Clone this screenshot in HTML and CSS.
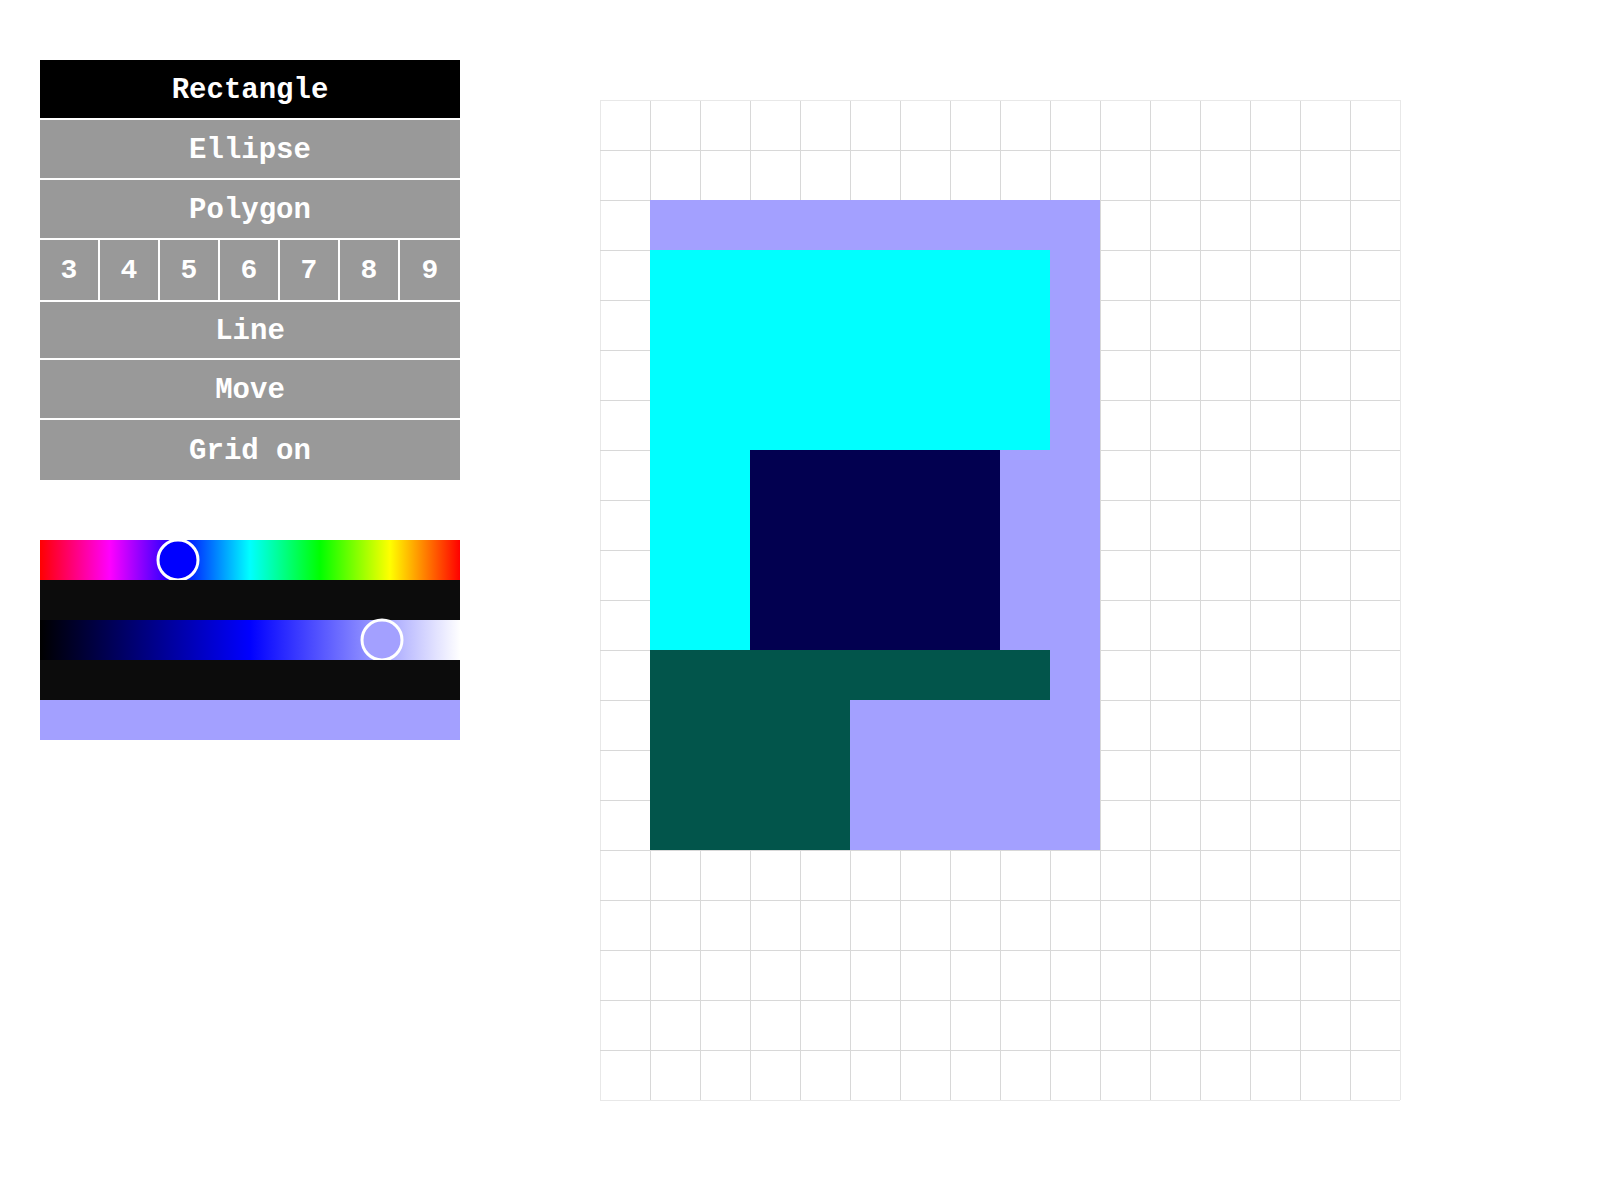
FILE: index.html
```html
<!DOCTYPE html>
<html>
<head>
<meta charset="utf-8">
<link rel="stylesheet" href="styles.css">
</head>
<body>
<div class="app">
  <div class="side">
    <div class="tools">
      <div class="btn active h58">Rectangle</div>
      <div class="btn h58">Ellipse</div>
      <div class="btn h58">Polygon</div>
      <div class="sides">
        <div class="num">3</div><div class="num">4</div><div class="num">5</div><div class="num">6</div><div class="num">7</div><div class="num">8</div><div class="num">9</div>
      </div>
      <div class="btn h56">Line</div>
      <div class="btn h58">Move</div>
      <div class="btn h60">Grid on</div>
    </div>
    <div class="picker">
      <div class="bar hue"><div class="knob knob-hue"></div></div>
      <div class="bar dark"></div>
      <div class="bar light"><div class="knob knob-light"></div></div>
      <div class="bar dark"></div>
      <div class="bar swatch"></div>
    </div>
  </div>
  <div class="canvas">
    <svg width="801" height="1001" viewBox="0 0 801 1001" xmlns="http://www.w3.org/2000/svg">
      <g id="grid" stroke="#d8d8d8" stroke-width="1" shape-rendering="crispEdges"></g>
      <g shape-rendering="crispEdges">
        <rect x="50" y="100" width="450" height="650" fill="#a3a0ff"/>
        <rect x="50" y="150" width="400" height="200" fill="#00ffff"/>
        <rect x="50" y="350" width="100" height="200" fill="#00ffff"/>
        <rect x="150" y="350" width="250" height="200" fill="#020050"/>
        <rect x="50" y="550" width="400" height="50" fill="#02554b"/>
        <rect x="50" y="600" width="200" height="150" fill="#02554b"/>
      </g>
    </svg>
  </div>
</div>
<script src="grid.js"></script>
</body>
</html>
```

FILE: grid.js
```js
(function () {
  var g = document.getElementById('grid');
  var ns = 'http://www.w3.org/2000/svg';
  function line(x1, y1, x2, y2, c) {
    var l = document.createElementNS(ns, 'line');
    l.setAttribute('x1', x1); l.setAttribute('y1', y1);
    l.setAttribute('x2', x2); l.setAttribute('y2', y2);
    if (c) l.setAttribute('stroke', c);
    g.appendChild(l);
  }
  for (var i = 0; i <= 16; i++) {
    var x = i * 50 + 0.5;
    line(x, 0, x, 1000, (i === 0 || i === 16) ? '#e8e8e8' : null);
  }
  for (var j = 0; j <= 20; j++) {
    var y = j * 50 + 0.5;
    line(0, y, 800, y, (j === 0 || j === 20) ? '#e8e8e8' : null);
  }
})();
```

FILE: styles.css
```css
html, body {
  margin: 0;
  padding: 0;
  background: #ffffff;
}

.app {
  display: flex;
  align-items: flex-start;
  padding: 60px 0 0 40px;
}

.side {
  width: 420px;
  display: flex;
  flex-direction: column;
  gap: 60px;
}

.tools {
  display: flex;
  flex-direction: column;
  gap: 2px;
}

.btn {
  background: #999999;
  color: #ffffff;
  font-family: "Liberation Mono", "DejaVu Sans Mono", monospace;
  font-weight: bold;
  font-size: 29px;
  display: flex;
  align-items: center;
  justify-content: center;
  padding-top: 2px;
  box-sizing: border-box;
}

.btn.active {
  background: #000000;
}

.h56 { height: 56px; }
.h58 { height: 58px; }
.h60 { height: 60px; }

.sides {
  display: flex;
  height: 60px;
}

.num {
  width: 60px;
  box-sizing: border-box;
  border-right: 2px solid #ffffff;
  background: #999999;
  color: #ffffff;
  font-family: "Liberation Mono", "DejaVu Sans Mono", monospace;
  font-weight: bold;
  font-size: 28px;
  display: flex;
  align-items: center;
  justify-content: center;
}

.num:last-child {
  border-right: none;
}

.picker {
  display: flex;
  flex-direction: column;
}

.bar {
  height: 40px;
  position: relative;
}

.hue {
  background: linear-gradient(to right, #ff0000 0%, #ff00ff 16.667%, #0000ff 33.333%, #00ffff 50%, #00ff00 66.667%, #ffff00 83.333%, #ff0000 100%);
}

.light {
  background: linear-gradient(to right, #000000 0%, #0000ff 50%, #ffffff 100%);
}

.dark {
  background: #0c0c0c;
}

.swatch {
  background: #a3a0ff;
}

.knob {
  position: absolute;
  top: 50%;
  width: 37px;
  height: 37px;
  border: 3px solid #ffffff;
  border-radius: 50%;
  transform: translate(-50%, -50%);
}

.knob-hue {
  left: 138px;
  background: #0000ff;
}

.knob-light {
  left: 342px;
  background: #a3a0ff;
}

.canvas {
  margin-left: 140px;
  margin-top: 40px;
  line-height: 0;
}
```
